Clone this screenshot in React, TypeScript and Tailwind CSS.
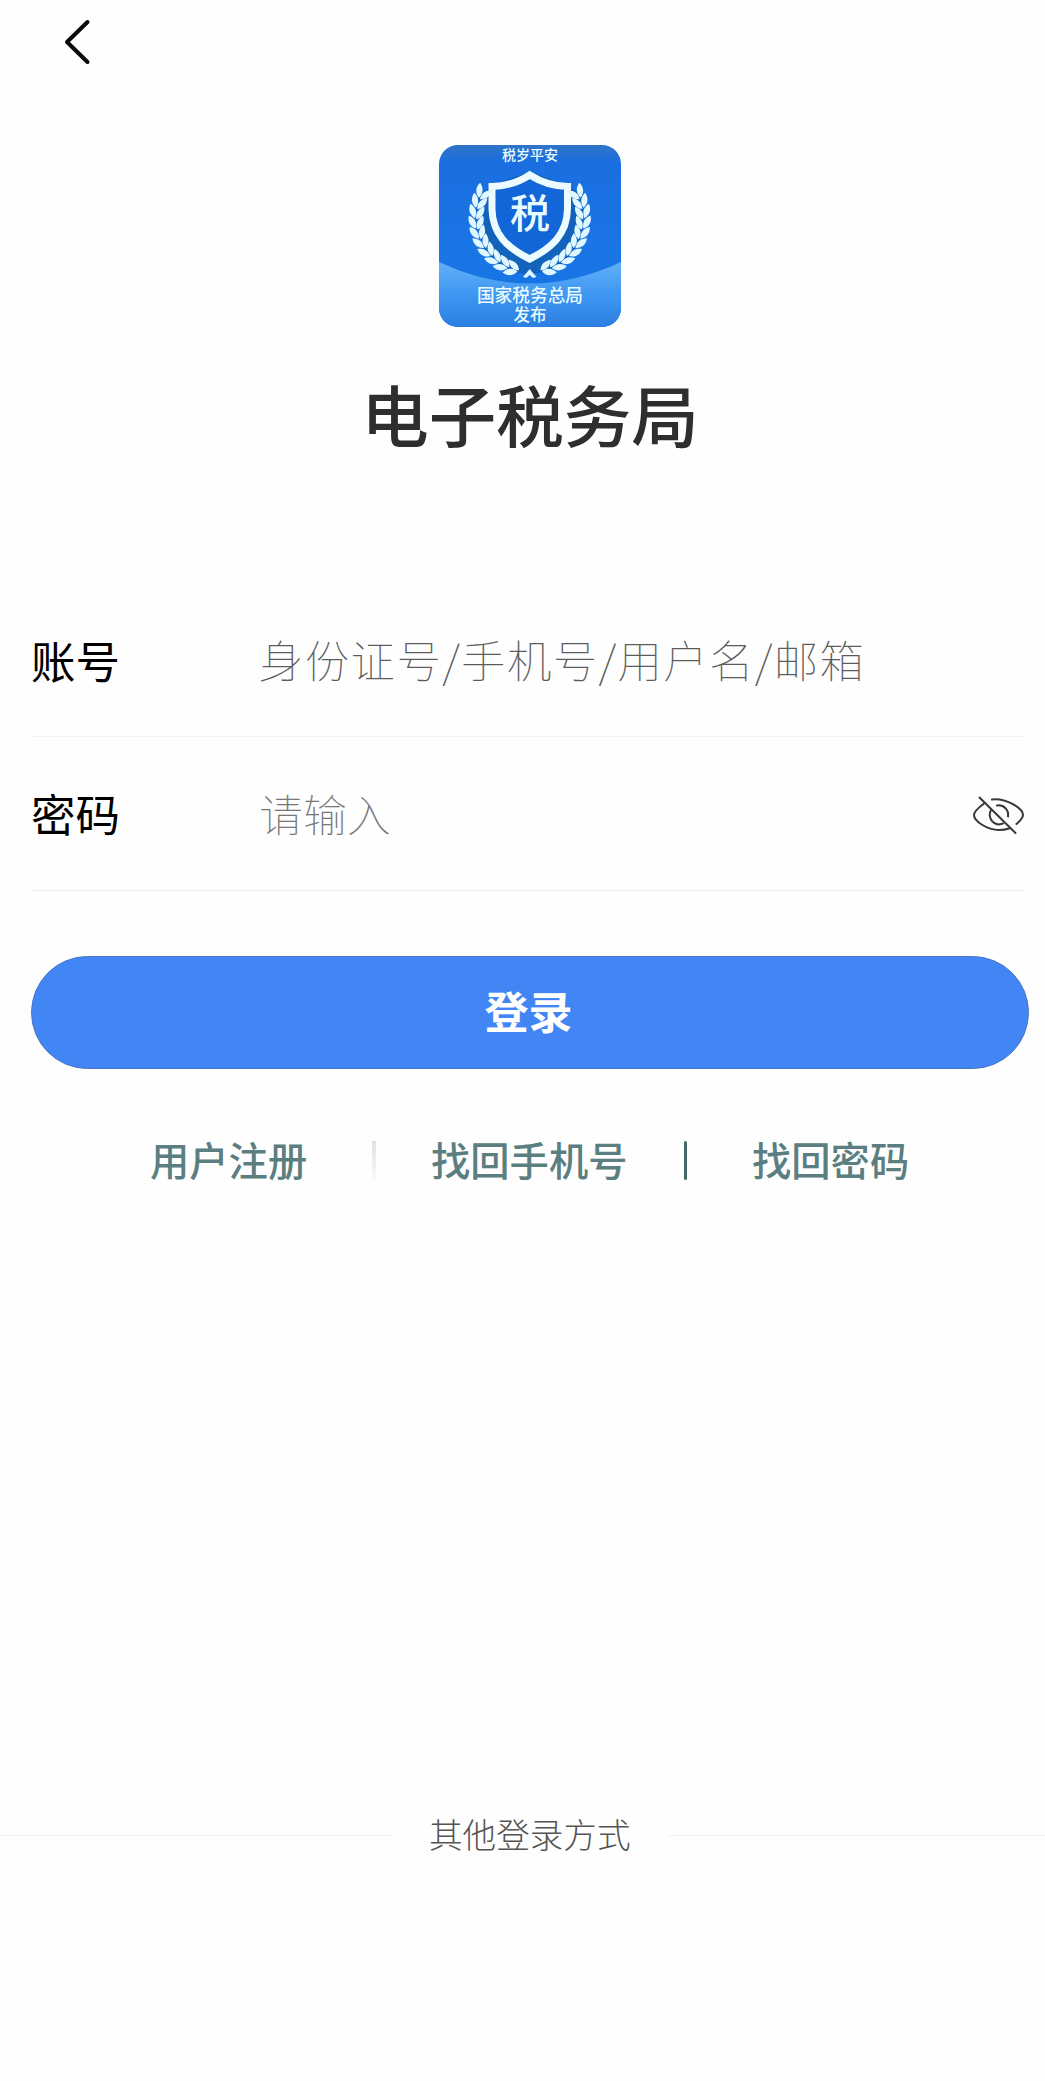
import { useState } from "react";
import { clsx } from "clsx";

interface FieldProps {
  label: string;
  placeholder: string;
  type?: "text" | "password";
  className?: string;
  inputClassName?: string;
  children?: React.ReactNode;
}

const leafAngles = [-26, -15, -4, 7, 18, 29, 40, 51, 62, 73];

function LaurelBranch() {
  return (
    <g fill="#dff8ff">
      {leafAngles.map((angle) => (
        <g key={angle} transform={`rotate(${-angle} 90.7 73) translate(36.2 73)`}>
          <path d="M0 4 C-6.500 1 -7.500 -5 -5.500 -10 C-0.500 -7 2 -3 0 4Z" />
          <path d="M1.500 5 C-0.500 -1 3 -6 8.500 -8 C9.500 -2 7 3 1.500 5Z" />
        </g>
      ))}
    </g>
  );
}

function AppLogo() {
  return (
    <svg viewBox="0 0 182 182" className="h-[182px] w-[182px] rounded-[19px]">
      <defs>
        <linearGradient id="sky" x1="0" y1="0" x2="0" y2="1">
          <stop offset="0" stopColor="#2f74c8" />
          <stop offset="0.1" stopColor="#1a6ee0" />
          <stop offset="0.65" stopColor="#1a76e6" />
          <stop offset="1" stopColor="#0f6fdc" />
        </linearGradient>
        <linearGradient id="hill" x1="0" y1="0" x2="0" y2="1">
          <stop offset="0" stopColor="#62b0f8" />
          <stop offset="0.5" stopColor="#3f97f2" />
          <stop offset="1" stopColor="#2a7ee0" />
        </linearGradient>
      </defs>
      <rect width="182" height="182" fill="url(#sky)" />
      <path d="M0 117 Q91 160 182 117 V182 H0Z" fill="url(#hill)" />
      <path
        d="M40 50 Q30 90 58 118 Q90 140 124 118 Q152 90 142 50 Q132 40 90 27 Q50 40 40 50Z"
        fill="#0f569f"
        opacity="0.6"
      />
      <path
        d="M90.700 30 Q74 41 53 41.500 V64 C53.500 89 68 103 90.700 114 C113 103 128 89 128.500 64 V41.500 Q108 41 90.700 30Z"
        fill="#1266d8"
        stroke="#ecfbff"
        strokeWidth="7"
      />
      <LaurelBranch />
      <g transform="translate(181.400 0) scale(-1 1)">
        <LaurelBranch />
      </g>
      <path d="M84 132 L90.700 124 L97.500 132 L94 133 L90.700 130 L87 133Z" fill="#dff8ff" />
      <g
        fill="#e9fbff"
        textAnchor="middle"
        className="font-['Noto_Sans_CJK_SC',sans-serif] font-medium"
      >
        <text x="91" y="15" fontSize="14">税岁平安</text>
        <text x="91" y="82.500" fontSize="40">税</text>
        <text x="91" y="157" fontSize="17.700">国家税务总局</text>
        <text x="91" y="176" fontSize="16.500">发布</text>
      </g>
    </svg>
  );
}

function Field({ label, placeholder, type = "text", className, inputClassName, children }: FieldProps) {
  return (
    <label className={clsx("flex items-center border-b", className)}>
      <span className="w-[228px] shrink-0 text-[44.5px] leading-none text-black">{label}</span>
      <input
        type={type}
        placeholder={placeholder}
        className={clsx(
          "h-[60px] min-w-0 flex-1 bg-transparent pb-px font-thin text-[#333] outline-none",
          inputClassName
        )}
      />
      {children}
    </label>
  );
}

export default function App() {
  const [visible, setVisible] = useState(false);

  return (
    <main className="flex h-[2081px] w-[1045px] flex-col overflow-hidden bg-[#fefefe] font-['Noto_Sans_CJK_SC',sans-serif]">
      <header className="h-[145px] pt-[18px] pl-[60px]">
        <button aria-label="返回" className="block">
          <svg width="32" height="48" viewBox="0 0 32 48" fill="none" stroke="#080808" strokeWidth="4" strokeLinecap="round" strokeLinejoin="round">
            <path d="M27.500 4 L7 24 L27.500 44" />
          </svg>
        </button>
      </header>

      <div className="flex flex-col items-center pl-[15px]">
        <AppLogo />
        <h1 className="mt-[52px] text-[67.5px] leading-[68px] font-medium text-[#2e2e2e]">电子税务局</h1>
      </div>

      <form className="mt-[137px] ml-[31px] w-[998px]" onSubmit={(e) => e.preventDefault()}>
        <Field
          label="账号"
          placeholder="身份证号/手机号/用户名/邮箱"
          className="mr-1 h-[153px] border-[#f5f5f5]"
          inputClassName="text-[44.5px] tracking-[1.3px] placeholder:text-[#5c5c5c]"
        />
        <Field
          label="密码"
          placeholder="请输入"
          type={visible ? "text" : "password"}
          className="mr-1 h-[154px] border-[#ececec]"
          inputClassName="text-[44px] placeholder:text-[#777]"
        >
          <button type="button" aria-label="显示密码" className="pt-[2px]" onClick={() => setVisible(!visible)}>
            <svg width="54" height="44" viewBox="0 0 54 44" fill="none" stroke="#383838" strokeWidth="2" strokeLinecap="round">
              <path d="M8.500 4.500 L44.500 40" />
              <path d="M13 10.500 C7 15 3 19 3 22 C3 28 16 37 28 37 C32 37 35 36.500 38 35.500" />
              <path d="M21 6.500 C34 4.500 52 15 52 22 C52 25 49 28 45.500 31" />
              <path d="M20 17 C17 23 20 31 28 31.500 L32 30.500" />
              <path d="M26 12.500 C33 11.500 38 17 37 23.500" />
            </svg>
          </button>
        </Field>

        <button
          type="submit"
          className="mt-[65px] block h-[113px] w-full rounded-full border border-[#4676c4] bg-[#4285f5] pr-[3px] pb-[5px] text-[44px] leading-none font-bold text-white"
        >
          登录
        </button>
      </form>

      <nav className="mt-[68px] flex items-center pl-[150px] text-[39.3px] leading-[40px] font-medium text-[#5b7f80]">
        <a className="w-[222px]">用户注册</a>
        <span className="mt-1 h-[39px] w-[4px] bg-linear-to-b from-[#dde3e2] to-[#fafafa]" />
        <a className="ml-[55px] w-[253px]">找回手机号</a>
        <span className="mt-1 h-[39px] w-[3px] rounded-full bg-[#45696a]" />
        <a className="ml-[65px]">找回密码</a>
      </nav>

      <footer className="mt-[634px] flex items-center text-[33.6px] leading-[40px] font-light text-[#555]">
        <span className="h-px w-[393px] bg-[#efefef]" />
        <span className="w-[275px] pb-[3px] pl-[36px]">其他登录方式</span>
        <span className="h-px flex-1 bg-[#f3f3f3]" />
      </footer>
    </main>
  );
}
